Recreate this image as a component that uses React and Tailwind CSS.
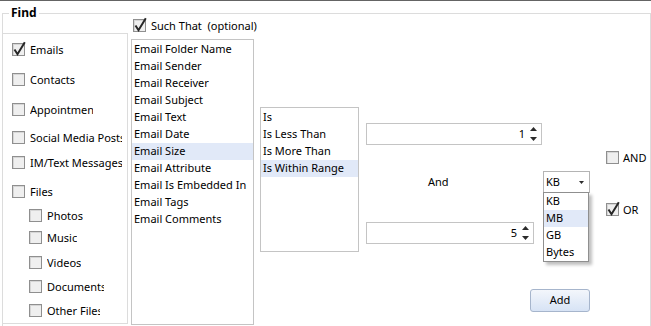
import React from 'react';

const Check = ({ checked }) => (
    <span className="relative inline-block w-[13px] h-[13px] shrink-0 border border-[#8f8f8f] bg-[#efefef] shadow-[inset_1px_1px_0_#d6d6d6]">
        {checked && (
            <svg className="absolute left-[-1px] top-[-3px] overflow-visible" width="14" height="15" viewBox="0 0 14 15">
                <path d="M2.5 8.5 L5.5 13.2 L12.8 1.2" fill="none" stroke="#262626" strokeWidth="2" />
            </svg>
        )}
    </span>
);

const findItems = [
    { label: 'Emails', checked: true, mt: 'mt-[9px]', pl: 'pl-[9px]' },
    { label: 'Contacts', mt: 'mt-[17px]', pl: 'pl-[9px]' },
    { label: 'Appointments', mt: 'mt-[17px]', pl: 'pl-[9px]', w: 'w-[63px]' },
    { label: 'Social Media Posts', mt: 'mt-[15px]', pl: 'pl-[9px]', w: 'w-[92px]' },
    { label: 'IM/Text Messages', mt: 'mt-[12px]', pl: 'pl-[9px]', w: 'w-[92px]' },
    { label: 'Files', mt: 'mt-[16px]', pl: 'pl-[9px]' },
    { label: 'Photos', mt: 'mt-[11px]', pl: 'pl-[26px]' },
    { label: 'Music', mt: 'mt-[9px]', pl: 'pl-[26px]' },
    { label: 'Videos', mt: 'mt-[12px]', pl: 'pl-[26px]' },
    { label: 'Documents', mt: 'mt-[11px]', pl: 'pl-[26px]', w: 'w-[57px]' },
    { label: 'Other Files', mt: 'mt-[11px]', pl: 'pl-[26px]', w: 'w-[53px]' },
];

const fields = [
    'Email Folder Name',
    'Email Sender',
    'Email Receiver',
    'Email Subject',
    'Email Text',
    'Email Date',
    'Email Size',
    'Email Attribute',
    'Email Is Embedded In',
    'Email Tags',
    'Email Comments',
];

const operators = ['Is', 'Is Less Than', 'Is More Than', 'Is Within Range'];
const units = ['KB', 'MB', 'GB', 'Bytes'];

const ListBox = ({ items, selected, className }) => (
    <div className={`border border-[#c4c4c4] bg-white pt-[1px] ${className}`}>
        {items.map((item) => (
            <div
                key={item}
                className={`h-[17px] leading-[16px] pl-[2px] whitespace-nowrap ${item === selected ? 'bg-[#e1e9f8]' : ''}`}
            >
                {item}
            </div>
        ))}
    </div>
);

const SpinArrows = () => (
    <div className="flex flex-col items-center gap-[6px] w-[8px]">
        <svg width="7" height="4" viewBox="0 0 7 4">
            <path d="M3.5 0 L7 4 L0 4 Z" fill="#2b2b2b" />
        </svg>
        <svg width="7" height="4" viewBox="0 0 7 4">
            <path d="M0 0 L7 0 L3.5 4 Z" fill="#2b2b2b" />
        </svg>
    </div>
);

const SpinBox = ({ value, className }) => (
    <div className={`h-[22px] border border-[#c4c4c4] bg-white flex items-center justify-end pr-[4px] ${className}`}>
        <span className="mr-[4px]">{value}</span>
        <SpinArrows />
    </div>
);

const App = () => {
    return (
        <div className="w-[651px] h-[326px] overflow-hidden bg-white border-t border-[#646464] font-['Noto_Sans',sans-serif] text-[11px] text-black">
            <div className="relative ml-[2px] mt-[12px] w-[649px] h-[320px] border-l border-t border-r border-[#dcdcdc]">
                <span className="absolute left-[6px] top-[-9px] px-[2px] bg-white font-bold text-[12px] leading-[16px]">Find</span>

                <div className="flex items-start">
                    {/* object types */}
                    <div className="mt-[19px] w-[125px] h-[291px] border-t border-r border-b border-[#dcdcdc] flex flex-col">
                        {findItems.map((it) => (
                            <div key={it.label} className={`flex items-center h-[13px] ${it.mt} ${it.pl}`}>
                                <Check checked={it.checked} />
                                <span className={`ml-[5px] whitespace-nowrap overflow-hidden leading-[16px] ${it.w || ''}`}>{it.label}</span>
                            </div>
                        ))}
                    </div>

                    {/* such that fields */}
                    <div className="ml-[3px] mt-[5px] w-[123px] flex flex-col">
                        <div className="flex items-center h-[13px] pl-[2px]">
                            <Check checked />
                            <span className="ml-[5px] whitespace-pre leading-[16px]">Such That  (optional)</span>
                        </div>
                        <ListBox items={fields} selected="Email Size" className="mt-[7px] w-[123px] h-[286px]" />
                    </div>

                    {/* operators */}
                    <ListBox items={operators} selected="Is Within Range" className="ml-[6px] mt-[93px] w-[99px] h-[145px]" />

                    {/* values */}
                    <div className="ml-[7px] mt-[109px] w-[224px] flex flex-col">
                        <SpinBox value="1" className="w-[176px]" />
                        <div className="mt-[26px] h-[22px] flex items-center">
                            <span className="ml-[62px]">And</span>
                            <div className="relative ml-auto w-[47px] h-[22px]">
                                <div className="h-full border border-[#b4b4b4] bg-white flex items-center justify-between pl-[2px] pr-[5px]">
                                    <span>KB</span>
                                    <svg width="5" height="3" viewBox="0 0 5 3">
                                        <path d="M0 0 L5 0 L2.5 3 Z" fill="#2b2b2b" />
                                    </svg>
                                </div>
                                <div className="absolute left-0 top-[21px] w-[46px] z-10 border border-[#8f8f8f] bg-white shadow-[3px_3px_3px_rgba(0,0,0,0.25)]">
                                    {units.map((u) => (
                                        <div key={u} className={`h-[17px] leading-[16px] pl-[2px] ${u === 'MB' ? 'bg-[#e1e9f8]' : ''}`}>
                                            {u}
                                        </div>
                                    ))}
                                </div>
                            </div>
                        </div>
                        <SpinBox value="5" className="mt-[29px] w-[168px]" />
                        <button className="self-end mt-[45px] w-[60px] h-[23px] rounded-[3px] border border-[#a6b5cc] bg-linear-to-b from-[#f3f6fb] to-[#d7e3f5] text-black">
                            Add
                        </button>
                    </div>

                    {/* and / or */}
                    <div className="ml-[16px] mt-[137px] flex flex-col">
                        <div className="flex items-center h-[13px]">
                            <Check />
                            <span className="ml-[4px] leading-[16px]">AND</span>
                        </div>
                        <div className="flex items-center h-[13px] mt-[39px]">
                            <Check checked />
                            <span className="ml-[4px] leading-[16px]">OR</span>
                        </div>
                    </div>
                </div>
            </div>
        </div>
    );
};

export default App;
